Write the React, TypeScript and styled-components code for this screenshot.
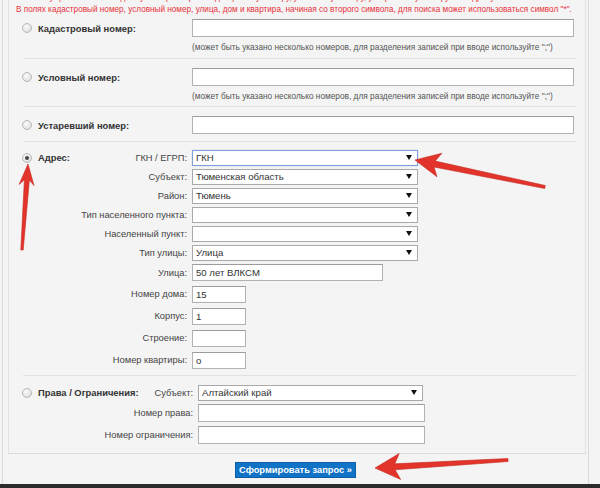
import React from 'react';
import styled, { createGlobalStyle } from 'styled-components';

const Global = createGlobalStyle`
  html, body { margin: 0; padding: 0; background: #f4f4f4; }
  body { font-family: "Liberation Sans", Arial, sans-serif; }
  * { box-sizing: border-box; }
`;

const Page = styled.div`
  position: relative;
  width: 600px;
  height: 488px;
  overflow: hidden;
  background: #f4f4f4;
  display: flex;
  flex-direction: column;
`;

const Frame = styled.div`
  flex: 1;
  margin-left: 2px;
  width: 587px;
  border-left: 1px solid #dadada;
  border-right: 1px solid #dadada;
  display: flex;
  flex-direction: column;
  min-height: 0;
`;

const Panel = styled.div`
  margin: 0 2px 0 5px;
  border-left: 1px solid #e2e2e2;
  border-right: 1px solid #e2e2e2;
  border-bottom: 1px solid #dcdcdc;
  padding-left: 7px;
`;

const Notice = styled.div<{ $cut?: boolean }>`
  font-size: 8.2px;
  line-height: 12px;
  height: 12px;
  color: #e8323a;
  white-space: nowrap;
  margin-top: ${(p) => (p.$cut ? '-8px' : '0')};
`;

const Section = styled.div<{ $field: number; $pt: number; $pb: number; $last?: boolean }>`
  display: grid;
  grid-template-columns: 15px 1fr ${(p) => p.$field}px;
  align-items: center;
  margin: 0 8px 0 7px;
  padding: ${(p) => p.$pt}px 3px ${(p) => p.$pb}px 0;
  border-bottom: ${(p) => (p.$last ? 'none' : '1px solid #e2e2e2')};
`;

const Radio = styled.span<{ $checked?: boolean }>`
  grid-column: 1;
  grid-row: 1;
  width: 10px;
  height: 10px;
  margin-left: -1px;
  border-radius: 50%;
  border: 1px solid #b9b9b9;
  background: radial-gradient(circle at 40% 35%, #fafafa 0%, #e2e2e2 70%, #d0d0d0 100%);
  display: flex;
  align-items: center;
  justify-content: center;
  &::after {
    content: '';
    display: ${(p) => (p.$checked ? 'block' : 'none')};
    width: 4px;
    height: 4px;
    border-radius: 50%;
    background: #444;
  }
`;

const MainLabel = styled.div`
  grid-column: 2;
  grid-row: 1;
  justify-self: start;
  font-size: 9.4px;
  font-weight: bold;
  color: #333;
  white-space: nowrap;
`;

const SubLabel = styled.div<{ $row: number }>`
  grid-column: 2;
  grid-row: ${(p) => p.$row};
  justify-self: end;
  padding-right: 5px;
  font-size: 9.3px;
  color: #444;
  white-space: nowrap;
`;

const Cell = styled.div<{ $row: number }>`
  grid-column: 3;
  grid-row: ${(p) => p.$row};
  display: flex;
`;

const TextInput = styled.input<{ $w: number; $h?: number; $m?: number }>`
  width: ${(p) => p.$w}px;
  height: ${(p) => p.$h ?? 18}px;
  margin: ${(p) => p.$m ?? 0}px 0;
  border: 1px solid #b2b2b2;
  border-top-color: #9c9c9c;
  background: #fff;
  padding: 0 3px;
  font-family: "Liberation Sans", Arial, sans-serif;
  font-size: 9.6px;
  color: #333;
  outline: none;
`;

const SelectBox = styled.div<{ $w: number; $focus?: boolean }>`
  width: ${(p) => p.$w}px;
  height: 16px;
  margin: 1.5px 0;
  border: 1px solid ${(p) => (p.$focus ? '#7e9fd8' : '#a9a9a9')};
  box-shadow: ${(p) => (p.$focus ? '0 0 1px #a8c2ee' : 'none')};
  background: #fff;
  display: flex;
  align-items: center;
  justify-content: space-between;
  padding: 0 5px 0 3px;
  font-size: 9.6px;
  color: #333;
`;

const Caret = styled.span`
  width: 0;
  height: 0;
  border-left: 3px solid transparent;
  border-right: 3px solid transparent;
  border-top: 5px solid #111;
`;

const Hint = styled.div`
  grid-column: 3;
  grid-row: 2;
  margin-top: 4px;
  font-size: 8.3px;
  line-height: 12px;
  color: #555;
  white-space: nowrap;
`;

const ButtonBar = styled.div`
  flex: 1;
  display: flex;
  justify-content: center;
  align-items: flex-start;
  padding-top: 8px;
`;

const Submit = styled.button`
  height: 16px;
  width: 121px;
  padding: 0;
  border: 1px solid #0b5fa8;
  background: #1173c5;
  color: #fff;
  font-family: "Liberation Sans", Arial, sans-serif;
  font-size: 9.3px;
  font-weight: bold;
  cursor: pointer;
`;

const BottomBar = styled.div`
  height: 4px;
  background: #2c2c2c;
`;

const Overlay = styled.svg`
  position: absolute;
  left: 0;
  top: 0;
  pointer-events: none;
`;

type P = { x: number; y: number };

function arrow(tip: P, tail: P, headLen: number, headW: number, w1: number, w2: number) {
  const dx = tail.x - tip.x;
  const dy = tail.y - tip.y;
  const L = Math.hypot(dx, dy);
  const ux = dx / L;
  const uy = dy / L;
  const nx = -uy;
  const ny = ux;
  const b = { x: tip.x + ux * headLen, y: tip.y + uy * headLen };
  const j = { x: tip.x + ux * (headLen - 5), y: tip.y + uy * (headLen - 5) };
  const pts = [
    [tip.x, tip.y],
    [b.x + (nx * headW) / 2, b.y + (ny * headW) / 2],
    [j.x + (nx * w1) / 2, j.y + (ny * w1) / 2],
    [tail.x + (nx * w2) / 2, tail.y + (ny * w2) / 2],
    [tail.x - (nx * w2) / 2, tail.y - (ny * w2) / 2],
    [j.x - (nx * w1) / 2, j.y - (ny * w1) / 2],
    [b.x - (nx * headW) / 2, b.y - (ny * headW) / 2],
  ];
  return pts.map((p) => `${p[0].toFixed(1)},${p[1].toFixed(1)}`).join(' ');
}

const HINT = '(может быть указано несколько номеров, для разделения записей при вводе используйте ";")';

const addressSelects: [string, string, boolean?][] = [
  ['ГКН / ЕГРП:', 'ГКН', true],
  ['Субъект:', 'Тюменская область'],
  ['Район:', 'Тюмень'],
  ['Тип населенного пункта:', ''],
  ['Населенный пункт:', ''],
  ['Тип улицы:', 'Улица'],
];

const addressSmall: [string, string][] = [
  ['Номер дома:', '15'],
  ['Корпус:', '1'],
  ['Строение:', ''],
  ['Номер квартиры:', 'o'],
];

export default function App() {
  return (
    <Page>
      <Global />
      <Frame>
        <Panel>
          <Notice $cut>
            Поиск осуществляется по одному из параметров: кадастровому номеру, условному номеру, устаревшему номеру или адресу.
          </Notice>
          <Notice>
            В полях кадастровый номер, условный номер, улица, дом и квартира, начиная со второго символа, для поиска может использоваться символ "*".
          </Notice>

          <Section $field={382} $pt={3} $pb={5}>
            <Radio />
            <MainLabel>Кадастровый номер:</MainLabel>
            <Cell $row={1}>
              <TextInput $w={382} defaultValue="" />
            </Cell>
            <Hint>{HINT}</Hint>
          </Section>

          <Section $field={382} $pt={9} $pb={4}>
            <Radio />
            <MainLabel>Условный номер:</MainLabel>
            <Cell $row={1}>
              <TextInput $w={382} defaultValue="" />
            </Cell>
            <Hint>{HINT}</Hint>
          </Section>

          <Section $field={382} $pt={9} $pb={7}>
            <Radio />
            <MainLabel>Устаревший номер:</MainLabel>
            <Cell $row={1}>
              <TextInput $w={382} defaultValue="" />
            </Cell>
          </Section>

          <Section $field={382} $pt={6} $pb={4}>
            <Radio $checked />
            <MainLabel>Адрес:</MainLabel>
            {addressSelects.map(([label, value, focus], i) => (
              <React.Fragment key={label}>
                <SubLabel $row={i + 1}>{label}</SubLabel>
                <Cell $row={i + 1}>
                  <SelectBox $w={226} $focus={focus}>
                    <span>{value}</span>
                    <Caret />
                  </SelectBox>
                </Cell>
              </React.Fragment>
            ))}
            <SubLabel $row={7}>Улица:</SubLabel>
            <Cell $row={7}>
              <TextInput $w={191} $h={17} $m={2} defaultValue="50 лет ВЛКСМ" />
            </Cell>
            {addressSmall.map(([label, value], i) => (
              <React.Fragment key={label}>
                <SubLabel $row={i + 8}>{label}</SubLabel>
                <Cell $row={i + 8}>
                  <TextInput $w={54} $h={17} $m={2.5} defaultValue={value} />
                </Cell>
              </React.Fragment>
            ))}
          </Section>

          <Section $field={376} $pt={7} $pb={7} $last>
            <Radio />
            <MainLabel>Права / Ограничения:</MainLabel>
            <SubLabel $row={1}>Субъект:</SubLabel>
            <Cell $row={1}>
              <SelectBox $w={225}>
                <span>Алтайский край</span>
                <Caret />
              </SelectBox>
            </Cell>
            <SubLabel $row={2}>Номер права:</SubLabel>
            <Cell $row={2}>
              <TextInput $w={227} $m={2} defaultValue="" />
            </Cell>
            <SubLabel $row={3}>Номер ограничения:</SubLabel>
            <Cell $row={3}>
              <TextInput $w={227} $m={2} defaultValue="" />
            </Cell>
          </Section>
        </Panel>
        <ButtonBar>
          <Submit type="button">Сформировать запрос »</Submit>
        </ButtonBar>
      </Frame>
      <BottomBar />

      <Overlay width={600} height={488} viewBox="0 0 600 488">
        <g fill="#e2342b" stroke="#c42820" strokeWidth={0.6} strokeLinejoin="round">
          <polygon points={arrow({ x: 415, y: 160 }, { x: 545, y: 187 }, 25, 24, 6, 3)} />
          <polygon points={arrow({ x: 28, y: 164 }, { x: 22, y: 250 }, 21, 15, 5, 2.5)} />
          <polygon points={arrow({ x: 375, y: 468 }, { x: 508, y: 460 }, 25, 26, 6, 3)} />
        </g>
      </Overlay>
    </Page>
  );
}
